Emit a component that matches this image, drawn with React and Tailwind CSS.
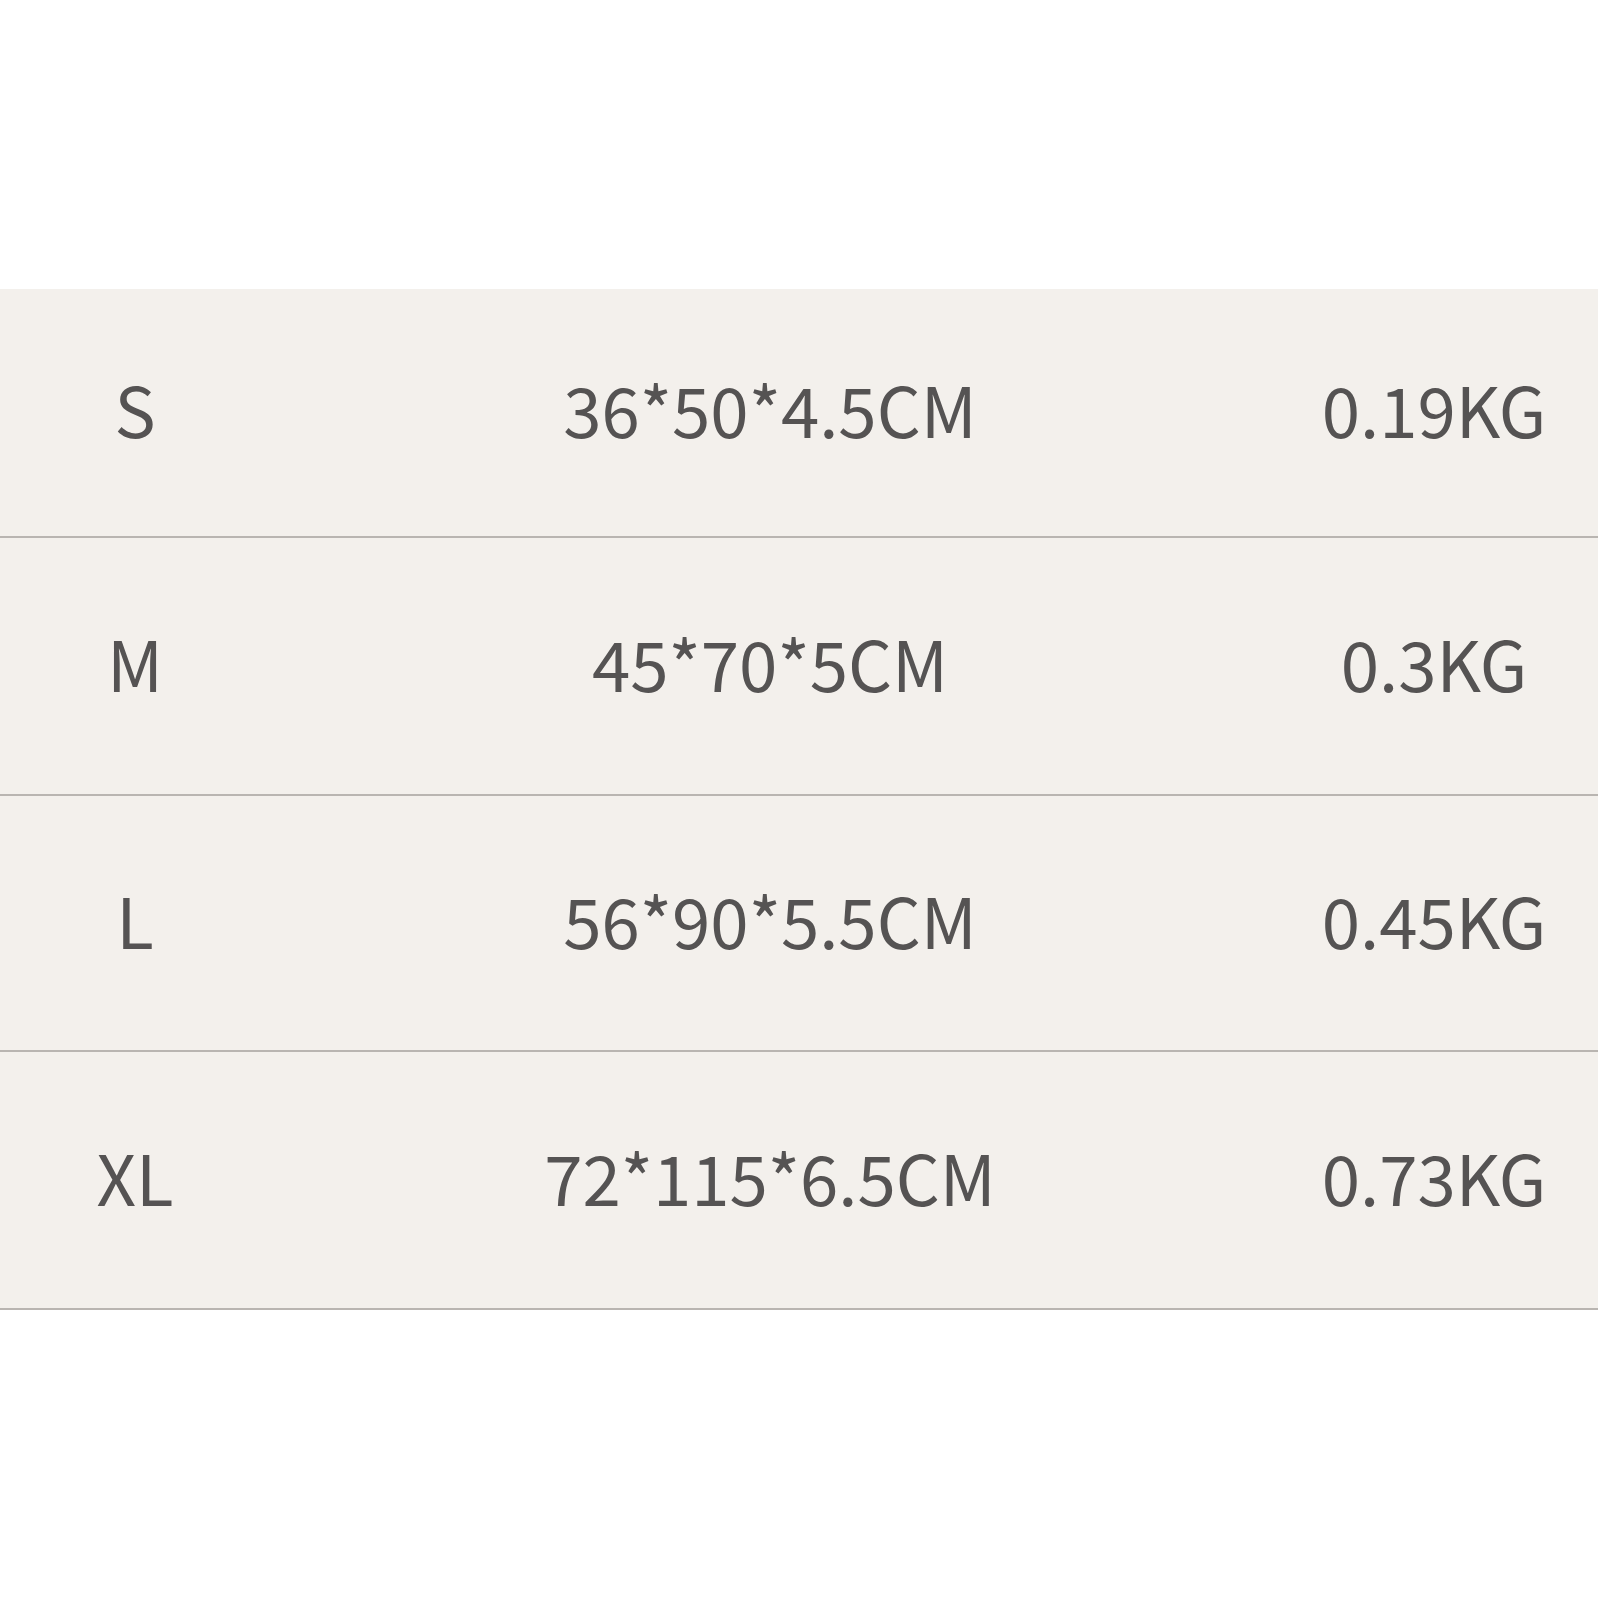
import React from "react";

const rows = [
  { size: "S", dims: "36*50*4.5CM", weight: "0.19KG", h: "h-[249px]" },
  { size: "M", dims: "45*70*5CM", weight: "0.3KG", h: "h-[258px]" },
  { size: "L", dims: "56*90*5.5CM", weight: "0.45KG", h: "h-[256px]" },
  { size: "XL", dims: "72*115*6.5CM", weight: "0.73KG", h: "h-[258px]" },
];

export default function App() {
  return (
    <div className="w-[1600px] h-[1600px] bg-white pt-[289px] font-['Noto_Sans_CJK_SC','Noto_Sans',sans-serif]">
      {/* Size table */}
      <div className="w-[1598px] bg-[#f3f0ec] text-[#555353]">
        {rows.map((r) => (
          <div
            key={r.size}
            className={`grid grid-cols-[270px_1000px_328px] items-center pb-[8px] border-b-2 border-[#b9b5b1] ${r.h}`}
          >
            <div className="text-center text-[69px] leading-none">{r.size}</div>
            <div className="text-center text-[69px] leading-none">{r.dims}</div>
            <div className="text-center text-[69px] leading-none">{r.weight}</div>
          </div>
        ))}
      </div>
    </div>
  );
}
